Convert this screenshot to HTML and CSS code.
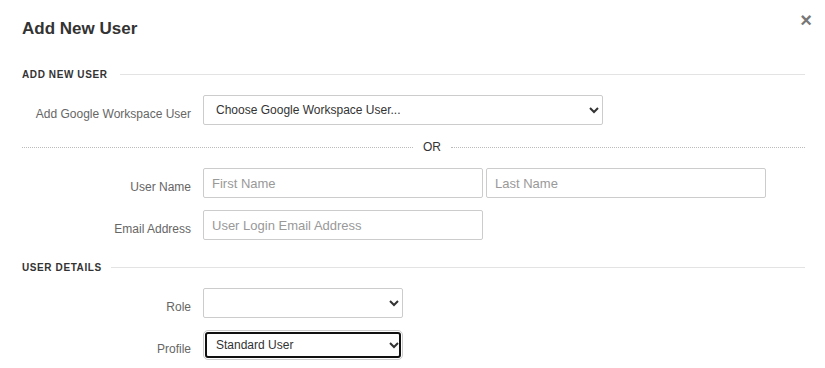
FILE: index.html
```html
<!DOCTYPE html>
<html lang="en">
<head>
  <meta charset="UTF-8" />
  <meta name="viewport" content="width=device-width, initial-scale=1.0"/>
  <title>Add New User</title>
  <link rel="stylesheet" href="styles.css">
</head>
<body>

  <div class="modal">
    <div class="modal-header">
      <h2>Add New User</h2>
      <button class="close" type="button" aria-label="Close">&times;</button>
    </div>

    <div class="section-title"><span>ADD NEW USER</span></div>

    <div class="form-row">
      <label for="gwUser">Add Google Workspace User</label>
      <select id="gwUser" class="wide">
        <option>Choose Google Workspace User...</option>
      </select>
    </div>

    <div class="or-row"><span>OR</span></div>

    <div class="form-row">
      <label for="firstName">User Name</label>
      <div class="pair">
        <input type="text" id="firstName" placeholder="First Name" />
        <input type="text" id="lastName" placeholder="Last Name" />
      </div>
    </div>

    <div class="form-row">
      <label for="email">Email Address</label>
      <input type="text" id="email" placeholder="User Login Email Address" />
    </div>

    <div class="section-title details"><span>USER DETAILS</span></div>

    <div class="form-row">
      <label for="role">Role</label>
      <select id="role" class="short">
        <option></option>
      </select>
    </div>

    <div class="form-row">
      <label for="profile">Profile</label>
      <select id="profile" class="short focused">
        <option>Standard User</option>
      </select>
    </div>
  </div>

</body>
</html>
```

FILE: styles.css
```css
body {
  margin: 0;
  background: #fff;
  font-family: "Liberation Sans", Arial, sans-serif;
  color: #333;
}
.modal {
  padding: 0 20px 0 22px;
}
.modal-header {
  display: flex;
  justify-content: space-between;
  align-items: flex-start;
  height: 56px;
}
.modal-header h2 {
  margin: 19px 0 0;
  font-size: 17px;
  font-weight: bold;
  color: #333;
}
.close {
  border: none;
  background: none;
  padding: 0;
  margin: 10px -7px 0 0;
  font-size: 20px;
  font-weight: bold;
  color: #777;
  line-height: 20px;
  cursor: pointer;
}
.section-title {
  display: flex;
  align-items: center;
  gap: 12px;
  height: 36px;
  margin-bottom: 3px;
  font-size: 10px;
  font-weight: bold;
  letter-spacing: 0.6px;
  color: #333;
}
.section-title::after {
  content: "";
  flex: 1;
  border-top: 1px solid #e3e3e3;
}
.section-title.details {
  gap: 9px;
  height: 30px;
  margin-bottom: 6px;
}
.form-row {
  display: flex;
  align-items: center;
  margin-bottom: 12px;
}
.form-row label {
  width: 169px;
  flex: none;
  margin-right: 12px;
  text-align: right;
  font-size: 12px;
  color: #666;
  padding-top: 8px;
}
input, select {
  box-sizing: border-box;
  height: 30px;
  border: 1px solid #ccc;
  border-radius: 2px;
  background: #fff;
  font-family: "Liberation Sans", Arial, sans-serif;
}
input {
  width: 280px;
  padding: 0 8px;
  font-size: 13px;
  color: #333;
}
input::placeholder {
  color: #999;
}
select {
  padding: 0 6px 0 8px;
  font-size: 12px;
  color: #333;
}
select.wide {
  width: 400px;
}
select.short {
  width: 200px;
}
select.focused {
  outline: 2px solid #111;
  outline-offset: -4px;
  border-radius: 5px;
}
.pair {
  display: flex;
  gap: 3px;
}
.or-row {
  display: flex;
  align-items: center;
  gap: 10px;
  height: 20px;
  margin-bottom: 11px;
  font-size: 12px;
  color: #333;
}
.or-row::before {
  content: "";
  width: 391px;
  border-top: 1px dotted #bbb;
}
.or-row::after {
  content: "";
  flex: 1;
  border-top: 1px dotted #bbb;
}
```
